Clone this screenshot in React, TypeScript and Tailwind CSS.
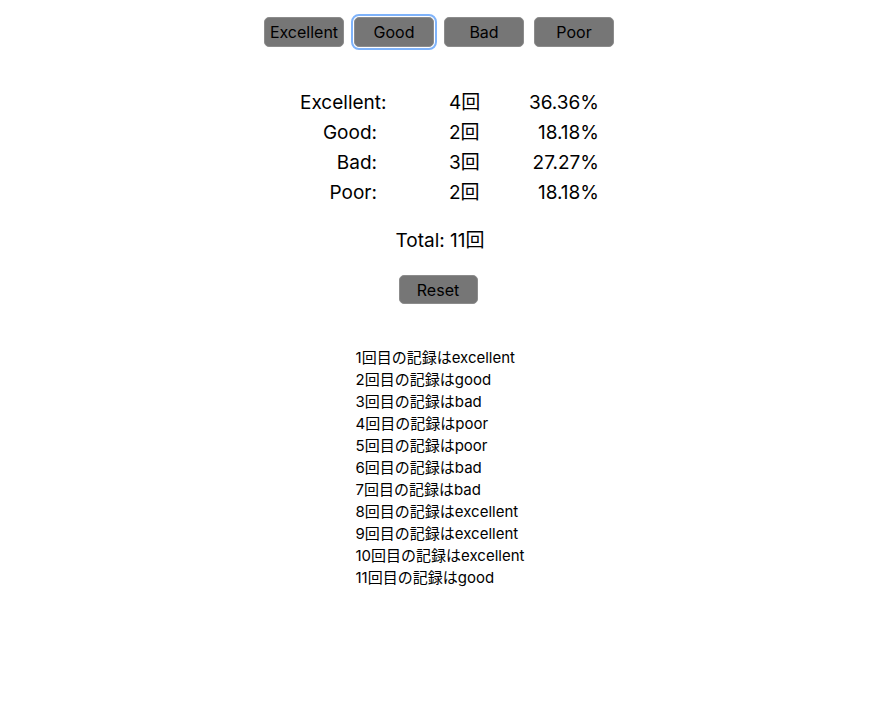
import React from "react";

const font = { fontFamily: 'Inter, "Noto Sans CJK JP", sans-serif' };

const records = [
  "excellent",
  "good",
  "bad",
  "poor",
  "poor",
  "bad",
  "bad",
  "excellent",
  "excellent",
  "excellent",
  "good",
];

const stats = [
  { label: "Excellent:", count: "4回", pct: "36.36%" },
  { label: "Good:", count: "2回", pct: "18.18%" },
  { label: "Bad:", count: "3回", pct: "27.27%" },
  { label: "Poor:", count: "2回", pct: "18.18%" },
];

function Btn({ children, focused }: { children: React.ReactNode; focused?: boolean }) {
  return (
    <button
      className={
        focused
          ? "w-[80px] h-[30px] rounded-[5px] border border-[#8c8c8c] bg-[#767676] text-[16px] text-black outline-[2.5px] outline-solid outline-[#7fb3fa] outline-offset-[1px]"
          : "w-[80px] h-[30px] rounded-[5px] border border-[#8c8c8c] bg-[#767676] text-[16px] text-black"
      }
    >
      {children}
    </button>
  );
}

export default function App() {
  return (
    <div className="w-[874px] h-[708px] bg-white text-black" style={font}>
      <div className="flex justify-center gap-[10px] pt-[17px] pl-[4px]">
        <Btn>Excellent</Btn>
        <Btn focused>Good</Btn>
        <Btn>Bad</Btn>
        <Btn>Poor</Btn>
      </div>

      <div className="flex justify-center pl-[25px] mt-[41px]">
        <div className="grid w-[299px] grid-cols-[77px_72px_1fr] text-[19px] leading-[30px]">
          {stats.map((s) => (
            <React.Fragment key={s.label}>
              <div className="text-right whitespace-nowrap">{s.label}</div>
              <div className="whitespace-nowrap pl-[72px] col-span-2 flex justify-between">
                <span>{s.count}</span>
                <span>{s.pct}</span>
              </div>
            </React.Fragment>
          ))}
        </div>
      </div>

      <div className="mt-[18px] flex justify-center pl-[6px] text-[19px] leading-[30px]">
        Total: 11回
      </div>

      <div className="mt-[19px] flex justify-center pl-[2px]">
        <button className="w-[79px] h-[29px] rounded-[5px] border border-[#8c8c8c] bg-[#767676] text-[16px] text-black">
          Reset
        </button>
      </div>

      <div className="mt-[43px] flex justify-center pl-[6px]">
        <div className="text-[15px] leading-[22px]">
          {records.map((r, i) => (
            <div key={i} className="whitespace-nowrap">
              {i + 1}回目の記録は{r}
            </div>
          ))}
        </div>
      </div>
    </div>
  );
}
